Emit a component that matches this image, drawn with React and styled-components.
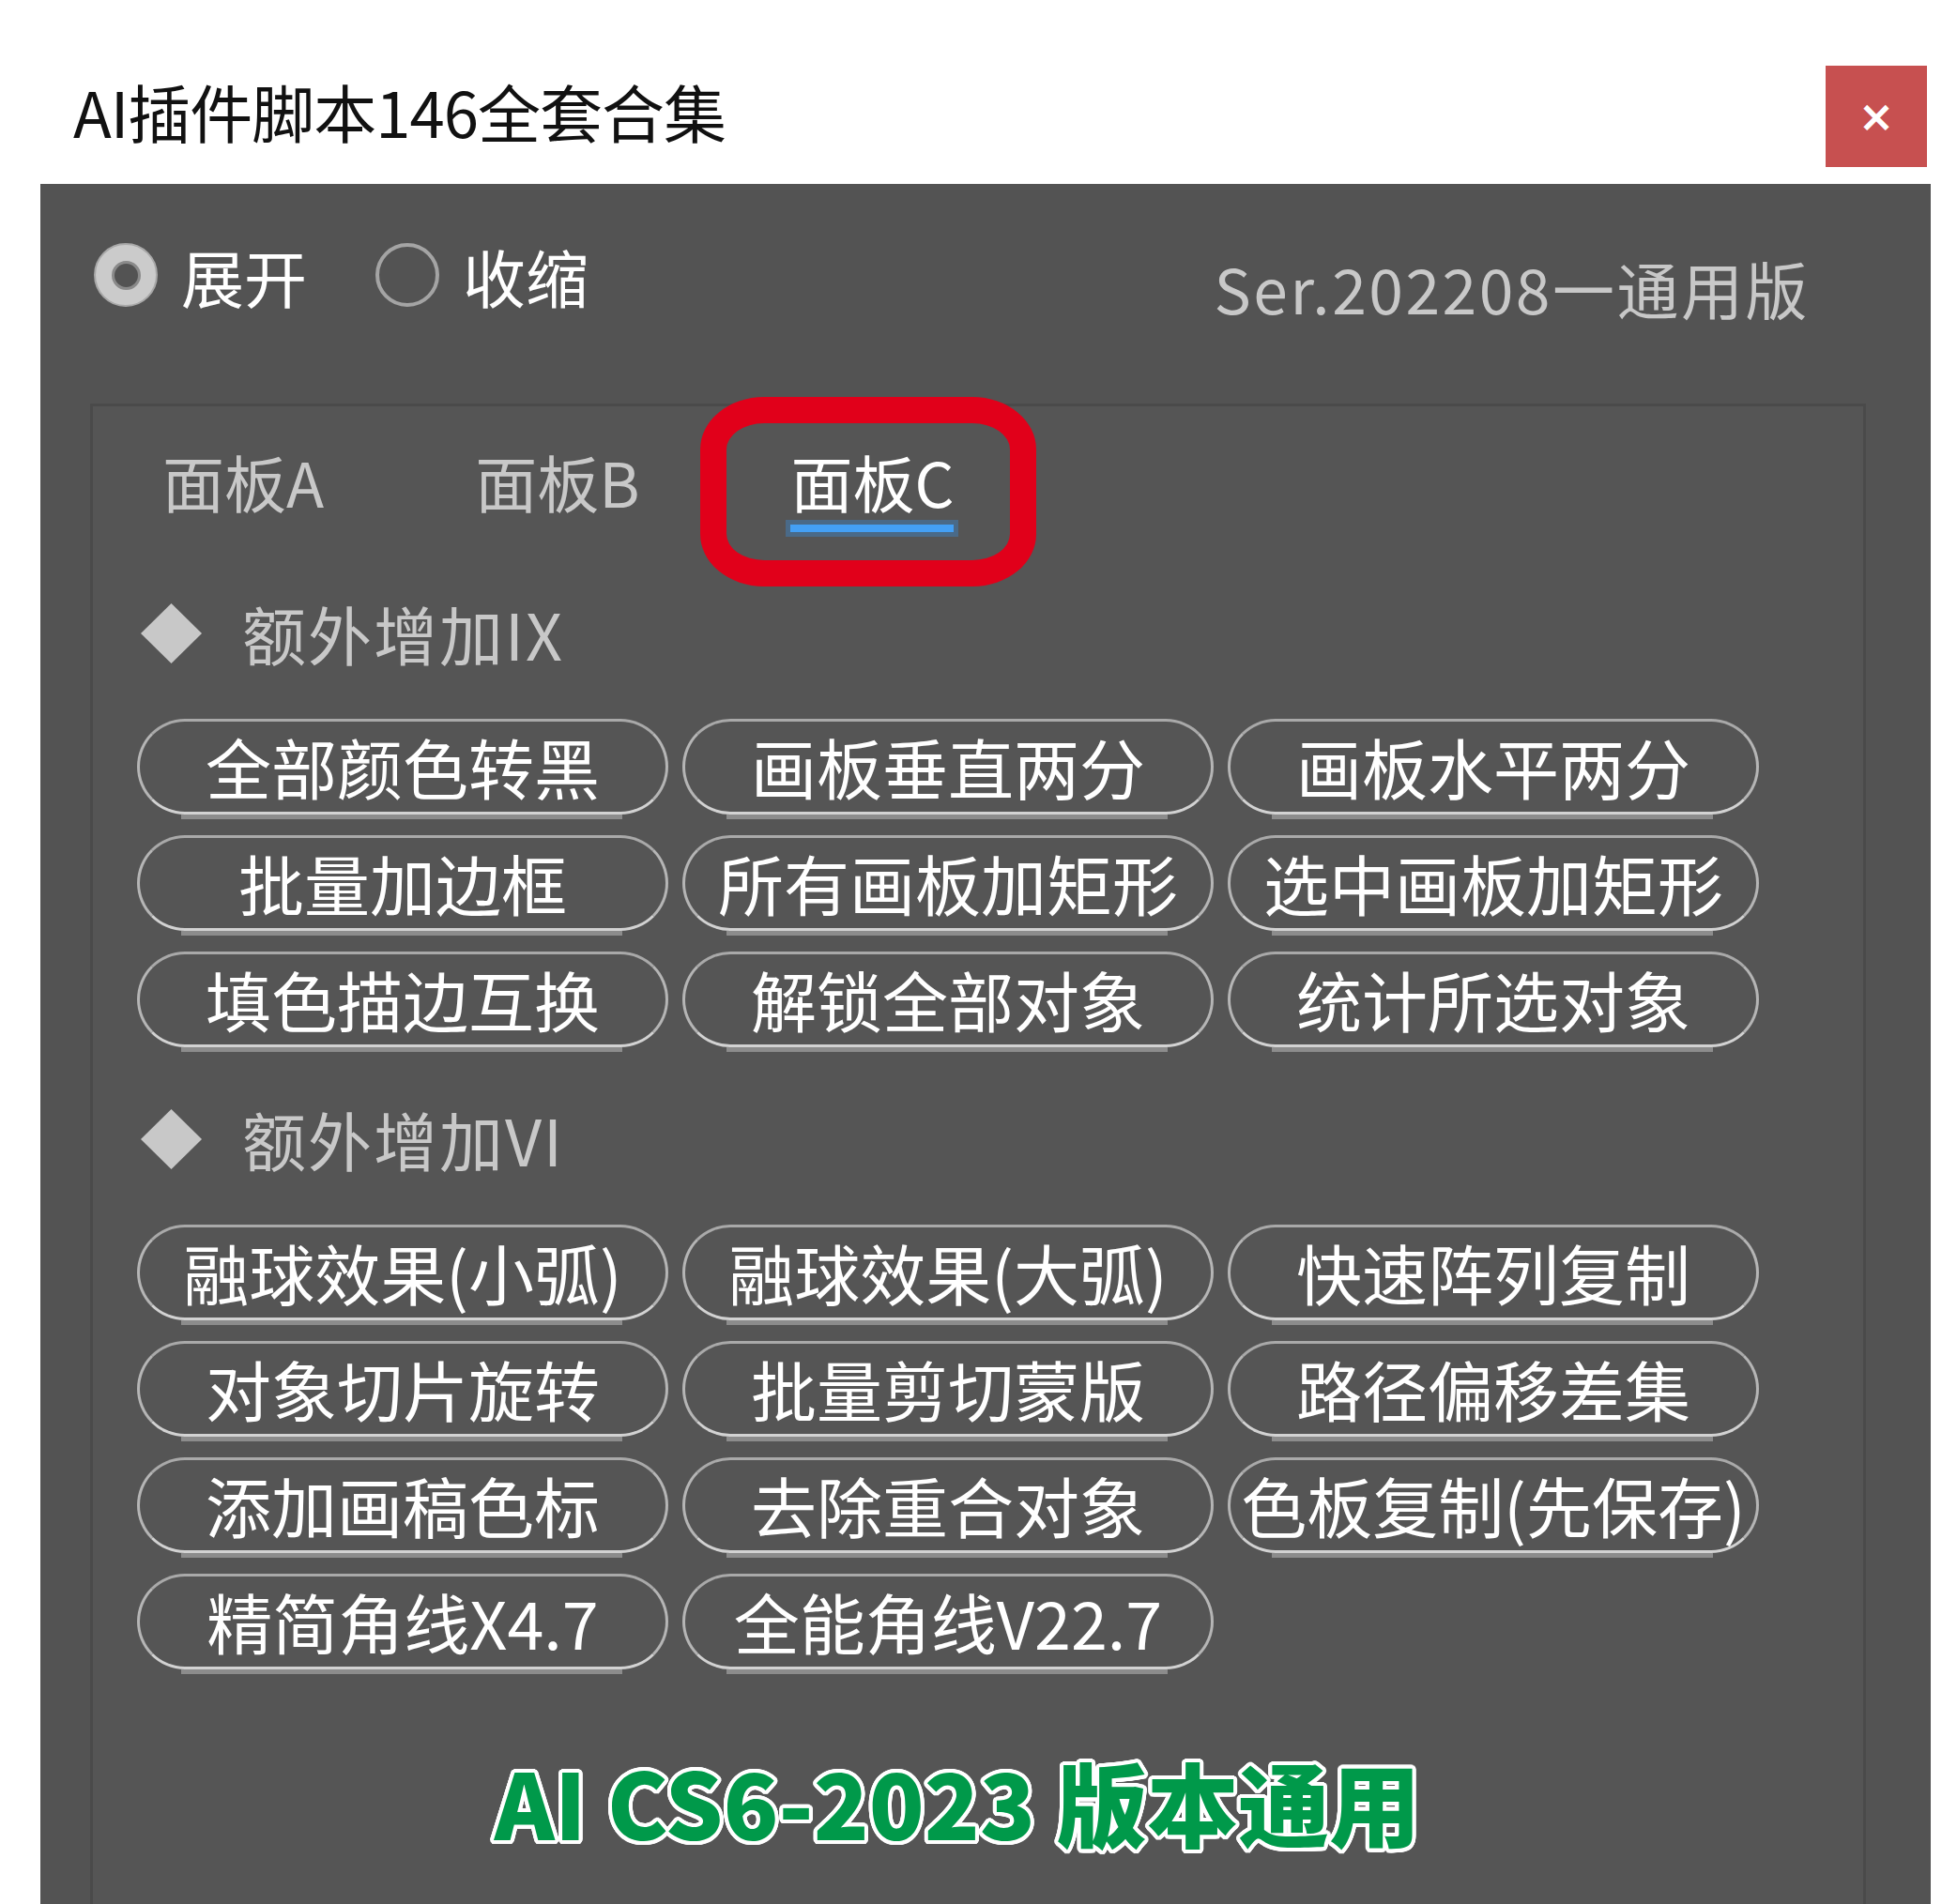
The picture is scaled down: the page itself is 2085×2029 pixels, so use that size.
import React from 'react'
import styled, { createGlobalStyle } from 'styled-components'

const colors = {
  page: '#ffffff',
  panel: '#535353',
  group: '#555555',
  groupBorder: '#4a4a4a',
  text: '#ffffff',
  muted: '#c8c8c8',
  close: '#c75050',
  accent: '#44a0f5',
  mark: '#e1001a',
  green: '#00994a',
}

const sans = `"Noto Sans CJK SC", "Noto Sans", "Liberation Sans", sans-serif`

const GlobalStyle = createGlobalStyle`
  html, body {
    margin: 0;
    padding: 0;
    background: ${colors.page};
  }
  body {
    font-family: ${sans};
  }
  * {
    box-sizing: border-box;
  }
`

const Window = styled.div`
  width: 2085px;
  height: 2029px;
  display: flex;
  flex-direction: column;
  overflow: hidden;
  background: ${colors.page};
`

const TitleBar = styled.header`
  height: 196px;
  flex: none;
  display: flex;
  align-items: flex-start;
  padding: 70px 32px 0 78px;
`

const Title = styled.h1`
  margin: 14px 0 0;
  font-size: 67px;
  line-height: 67px;
  font-weight: 400;
  color: #111;
  letter-spacing: -1px;
`

const CloseButton = styled.button`
  margin-left: auto;
  width: 108px;
  height: 108px;
  border: 0;
  padding: 0;
  background: ${colors.close};
  color: #fff;
  font-family: 'DejaVu Sans', sans-serif;
  font-weight: 700;
  font-size: 46px;
  line-height: 1;
  display: flex;
  align-items: center;
  justify-content: center;
`

const Panel = styled.main`
  flex: 1;
  margin: 0 28px 0 43px;
  background: ${colors.panel};
  padding: 63px 69px 0 53px;
  display: flex;
  flex-direction: column;
`

const ModeRow = styled.div`
  height: 68px;
  display: flex;
  align-items: center;
  padding: 0 60px 0 4px;
`

const RadioOption = styled.label`
  display: flex;
  align-items: center;
  gap: 25px;
  margin-right: 73px;
  color: ${colors.text};
  font-size: 67px;
  line-height: 1;
`

const RadioDot = styled.span`
  width: 68px;
  height: 68px;
  border-radius: 50%;
  flex: none;
  display: flex;
  align-items: center;
  justify-content: center;
  background: ${(p) => (p.checked ? '#cbcbcb' : 'transparent')};
  border: ${(p) => (p.checked ? '2px solid #a8a8a8' : '4px solid #a4a4a4')};

  &::after {
    content: '';
    display: ${(p) => (p.checked ? 'block' : 'none')};
    width: 25px;
    height: 25px;
    border-radius: 50%;
    background: ${colors.panel};
    border: 3px solid #8a8a8a;
  }
`

const Version = styled.span`
  margin-left: auto;
  margin-top: 26px;
  font-size: 66px;
  line-height: 1;
  letter-spacing: 2.5px;
  color: ${colors.muted};
  white-space: nowrap;
`

const GroupBox = styled.section`
  position: relative;
  flex: 1;
  margin-top: 103px;
  background: ${colors.group};
  border: 3px solid ${colors.groupBorder};
  border-bottom: 0;
  padding: 46px 0 0 0;
`

const TabBar = styled.div`
  display: flex;
  gap: 137px;
  padding-left: 62px;
`

const Tab = styled.div`
  display: flex;
  flex-direction: column;
  align-items: center;
  padding: 0 12px;
`

const TabLabel = styled.span`
  font-size: 66px;
  line-height: 66px;
  white-space: nowrap;
  color: ${(p) => (p.active ? colors.text : colors.muted)};
`

const TabUnderline = styled.span`
  align-self: stretch;
  margin: 9px -4px 0 -6px;
  height: 18px;
  background: ${(p) => (p.active ? colors.accent : 'transparent')};
  border: 5px solid ${(p) => (p.active ? '#4a6a88' : 'transparent')};
`

const Highlight = styled.div`
  position: absolute;
  left: 647px;
  top: -10px;
  width: 358px;
  height: 202px;
  border: 28px solid ${colors.mark};
  border-radius: 68px / 56px;
  pointer-events: none;
`

const SectionHeader = styled.div`
  display: flex;
  align-items: center;
  gap: 43px;
  height: 70px;
  margin-top: ${(p) => p.offset}px;
  padding-left: 51px;
`

const Diamond = styled.span`
  width: 65px;
  height: 64px;
  flex: none;
  background: ${colors.muted};
  clip-path: polygon(50% 0, 100% 50%, 50% 100%, 0 50%);
`

const SectionTitle = styled.h2`
  margin: 0;
  font-size: 68px;
  line-height: 1;
  font-weight: 400;
  letter-spacing: 2px;
  color: ${colors.muted};
`

const ButtonGrid = styled.div`
  display: grid;
  grid-template-columns: repeat(3, 566px);
  grid-auto-rows: 102px;
  column-gap: 15px;
  row-gap: 22px;
  margin-top: 56px;
  padding-left: 47px;
`

const ScriptButton = styled.button`
  position: relative;
  height: 102px;
  padding: 0;
  background: transparent;
  border: 3px solid #b5b5b5;
  border-top-color: #a9a9a9;
  border-bottom-color: #d2d2d2;
  border-radius: 52px;
  color: ${colors.text};
  font-family: ${sans};
  font-size: 70px;
  line-height: 1;
  white-space: nowrap;
  display: flex;
  align-items: center;
  justify-content: center;

  &::after {
    content: '';
    position: absolute;
    left: 44px;
    right: 46px;
    bottom: -8px;
    height: 5px;
    background: #8c8c8c;
  }
`

const Footer = styled.div`
  margin-top: 91px;
  padding-right: 44px;
  text-align: center;
  font-size: 97px;
  line-height: 1;
  font-weight: 900;
  color: ${colors.green};
  white-space: nowrap;
  text-shadow: ${() => {
    const out = []
    for (let i = 0; i < 24; i++) {
      const a = (i / 24) * Math.PI * 2
      out.push(`${(Math.cos(a) * 4).toFixed(1)}px ${(Math.sin(a) * 4).toFixed(1)}px 0 #fff`)
    }
    return out.join(', ')
  }};
`

const sectionOne = [
  '全部颜色转黑',
  '画板垂直两分',
  '画板水平两分',
  '批量加边框',
  '所有画板加矩形',
  '选中画板加矩形',
  '填色描边互换',
  '解锁全部对象',
  '统计所选对象',
]

const sectionTwo = [
  '融球效果(小弧)',
  '融球效果(大弧)',
  '快速阵列复制',
  '对象切片旋转',
  '批量剪切蒙版',
  '路径偏移差集',
  '添加画稿色标',
  '去除重合对象',
  '色板复制(先保存)',
  '精简角线X4.7',
  '全能角线V22.7',
]

const tabs = ['面板A', '面板B', '面板C']

const Section = ({ title, items, offset }) => (
  <>
    <SectionHeader offset={offset}>
      <Diamond />
      <SectionTitle>{title}</SectionTitle>
    </SectionHeader>
    <ButtonGrid>
      {items.map((label) => (
        <ScriptButton key={label}>{label}</ScriptButton>
      ))}
    </ButtonGrid>
  </>
)

const App = () => (
  <>
    <GlobalStyle />
    <Window>
      <TitleBar>
        <Title>AI插件脚本146全套合集</Title>
        <CloseButton>×</CloseButton>
      </TitleBar>
      <Panel>
        <ModeRow>
          <RadioOption>
            <RadioDot checked />
            展开
          </RadioOption>
          <RadioOption>
            <RadioDot />
            收缩
          </RadioOption>
          <Version>Ser.202208一通用版</Version>
        </ModeRow>
        <GroupBox>
          <TabBar>
            {tabs.map((t, i) => (
              <Tab key={t}>
                <TabLabel active={i === 2}>{t}</TabLabel>
                <TabUnderline active={i === 2} />
              </Tab>
            ))}
          </TabBar>
          <Highlight />
          <Section title='额外增加IX' items={sectionOne} offset={68} />
          <Section title='额外增加VI' items={sectionTwo} offset={63} />
          <Footer>AI CS6-2023 版本通用</Footer>
        </GroupBox>
      </Panel>
    </Window>
  </>
)

export default App
